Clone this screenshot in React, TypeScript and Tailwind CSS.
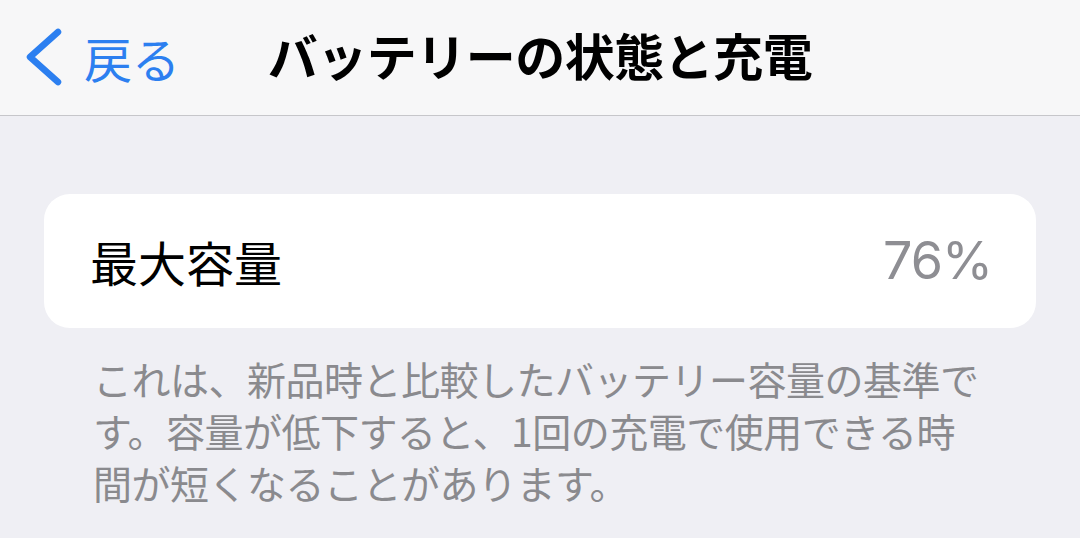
import React from 'react';

const jp = { fontFamily: '"Noto Sans CJK JP", "Noto Sans", sans-serif' };

const BackChevron: React.FC = () => (
  <svg width="40" height="64" viewBox="0 0 40 64" fill="none" className="shrink-0">
    <path d="M36 7 L8 32 L36 57" stroke="#2c7ff0" strokeWidth="6.5" strokeLinecap="round" strokeLinejoin="round" />
  </svg>
);

const App: React.FC = () => {
  return (
    <div className="w-[1080px] h-[538px] overflow-hidden bg-[#efeff4]" style={jp}>
      {/* Nav bar */}
      <div className="h-[116px] bg-[#f7f7f8] border-b border-[#c6c6ca] grid grid-cols-[1fr_auto_1fr] items-center">
        <div className="flex items-center pl-[22px] pb-[2px]">
          <BackChevron />
          <span className="ml-[22px] text-[48px] leading-none text-[#2c7ff0]">戻る</span>
        </div>
        <h1 className="text-[50px] font-bold leading-none text-black tracking-[-0.5px] pb-[8px]">バッテリーの状態と充電</h1>
        <div />
      </div>

      {/* Content */}
      <div className="pt-[78px] px-[44px]">
        <div className="h-[134px] bg-white rounded-[26px] flex items-center justify-between pl-[46px] pr-[44px]">
          <span className="text-[48px] leading-none text-black">最大容量</span>
          <span className="text-[52px] leading-none text-[#8e8e93] tracking-[-1px]" style={{ fontFamily: 'Inter, "Noto Sans", sans-serif' }}>76%</span>
        </div>
        <p className="mt-[24px] ml-[49px] text-[39px] leading-[52px] tracking-[-0.5px] text-[#8a8a8e] whitespace-nowrap">
          これは、新品時と比較したバッテリー容量の基準で
          <br />
          す。容量が低下すると、1回の充電で使用できる時
          <br />
          間が短くなることがあります。
        </p>
      </div>
    </div>
  );
};

export default App;
